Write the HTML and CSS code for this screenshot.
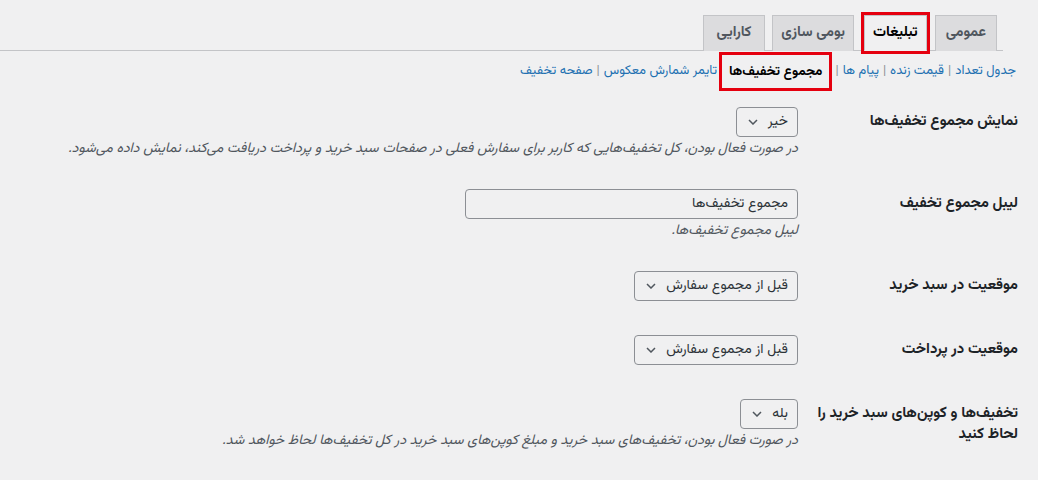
FILE: index.html
```html
<!DOCTYPE html>
<html lang="fa" dir="rtl">
<head>
<meta charset="utf-8">
<title>تنظیمات تبلیغات</title>
<link rel="stylesheet" href="styles.css">
</head>
<body>
<div class="wrap">
  <nav class="tabs">
    <a class="tab" href="#">عمومی</a>
    <a class="tab tab-active" href="#">تبلیغات</a>
    <a class="tab tab-narrow" href="#">بومی سازی</a>
    <a class="tab tab-wide" href="#">کارایی</a>
  </nav>
  <ul class="subnav">
    <li><a href="#">جدول تعداد</a><span class="sep">|</span></li>
    <li><a href="#">قیمت زنده</a><span class="sep">|</span></li>
    <li><a href="#">پیام ها</a><span class="sep">|</span></li>
    <li><a class="current" href="#">مجموع تخفیف‌ها</a></li>
    <li><a href="#">تایمر شمارش معکوس</a><span class="sep">|</span></li>
    <li><a href="#">صفحه تخفیف</a></li>
  </ul>
  <div class="form">
    <div class="row">
      <div class="label">نمایش مجموع تخفیف‌ها</div>
      <div class="field">
        <span class="select"><span class="select-text">خیر</span><svg class="chev" width="10" height="6" viewBox="0 0 10 6"><path d="M1 1l4 4 4-4" fill="none" stroke="#50575e" stroke-width="1.5"/></svg></span>
        <p class="desc">در صورت فعال بودن، کل تخفیف‌هایی که کاربر برای سفارش فعلی در صفحات سبد خرید و پرداخت دریافت می‌کند، نمایش داده می‌شود.</p>
      </div>
    </div>
    <div class="row">
      <div class="label">لیبل مجموع تخفیف</div>
      <div class="field">
        <span class="input">مجموع تخفیف‌ها</span>
        <p class="desc">لیبل مجموع تخفیف‌ها.</p>
      </div>
    </div>
    <div class="row row-plain">
      <div class="label">موقعیت در سبد خرید</div>
      <div class="field">
        <span class="select"><span class="select-text">قبل از مجموع سفارش</span><svg class="chev" width="10" height="6" viewBox="0 0 10 6"><path d="M1 1l4 4 4-4" fill="none" stroke="#50575e" stroke-width="1.5"/></svg></span>
      </div>
    </div>
    <div class="row row-plain">
      <div class="label">موقعیت در پرداخت</div>
      <div class="field">
        <span class="select"><span class="select-text">قبل از مجموع سفارش</span><svg class="chev" width="10" height="6" viewBox="0 0 10 6"><path d="M1 1l4 4 4-4" fill="none" stroke="#50575e" stroke-width="1.5"/></svg></span>
      </div>
    </div>
    <div class="row">
      <div class="label label-nowrap">تخفیف‌ها و کوپن‌های سبد خرید را<br>لحاظ کنید</div>
      <div class="field">
        <span class="select"><span class="select-text">بله</span><svg class="chev" width="10" height="6" viewBox="0 0 10 6"><path d="M1 1l4 4 4-4" fill="none" stroke="#50575e" stroke-width="1.5"/></svg></span>
        <p class="desc">در صورت فعال بودن، تخفیف‌های سبد خرید و مبلغ کوپن‌های سبد خرید در کل تخفیف‌ها لحاظ خواهد شد.</p>
      </div>
    </div>
  </div>
</div>
</body>
</html>
```
FILE: styles.css
```css
html, body {
  margin: 0;
  padding: 0;
  background: #f0f0f1;
}
body {
  direction: rtl;
  font-family: "Vazirmatn", "Noto Sans Arabic", "Noto Naskh Arabic", "DejaVu Sans", sans-serif;
  color: #1d2327;
  font-size: 14px;
}
.wrap {
  padding-right: 20px;
}
.tabs {
  display: flex;
  align-items: flex-end;
  margin-right: 15px;
  padding-right: 6px;
  padding-top: 15px;
  border-bottom: 1px solid #c3c4c7;
  height: 35px;
}
.tab {
  display: block;
  box-sizing: border-box;
  height: 36px;
  line-height: 33px;
  padding: 0 10px;
  margin-left: 7px;
  margin-bottom: -1px;
  border: 1px solid #c3c4c7;
  border-bottom: none;
  background: #dcdcde;
  color: #50575e;
  font-weight: 700;
  font-size: 14.5px;
  text-decoration: none;
}
.tab-narrow {
  padding: 0 8px;
}
.tab-wide {
  padding: 0 13px;
}
.tab-active {
  background: #f0f0f1;
  color: #000;
  border-bottom: 1px solid #f0f0f1;
  outline: 3px solid #e5000f;
  padding: 0 8px;
  margin-left: 10px;
  margin-right: 1px;
}
.subnav {
  list-style: none;
  margin: 0 2px 0 0;
  padding: 0;
  display: flex;
  align-items: center;
  height: 40px;
  font-size: 13px;
}
.subnav li {
  display: flex;
  align-items: center;
}
.subnav a {
  color: #2271b1;
  text-decoration: none;
}
.subnav .sep {
  color: #8c8f94;
  padding: 0 4px;
}
.subnav .current {
  color: #000;
  font-weight: 700;
  font-size: 13.5px;
  padding: 6px 7px;
  outline: 3px solid #e5000f;
  margin: 0 2px 0 5px;
}
.form {
  margin-top: 1px;
}
.row {
  display: flex;
  align-items: flex-start;
}
.label {
  width: 200px;
  flex: none;
  padding: 19px 0 17px 10px;
  font-weight: 700;
  font-size: 15px;
  line-height: 21px;
  color: #1d2327;
}
.label-nowrap {
  white-space: nowrap;
}
.field {
  padding: 15px 10px;
  flex: 1;
}
.row-plain .field {
  padding-bottom: 19px;
}
.select {
  display: inline-flex;
  align-items: center;
  gap: 10px;
  height: 30px;
  box-sizing: border-box;
  padding: 0 9px 0 11px;
  border: 1px solid #8c8f94;
  border-radius: 4px;
  color: #2c3338;
  font-size: 14px;
}
.chev {
  display: block;
  flex: none;
}
.input {
  display: flex;
  align-items: center;
  width: 333px;
  height: 30px;
  box-sizing: border-box;
  padding: 0 9px;
  border: 1px solid #8c8f94;
  border-radius: 4px;
  color: #2c3338;
  font-size: 14px;
}
.desc {
  margin: 2px 0 0;
  font-size: 14px;
  line-height: 20px;
  font-style: italic;
  color: #50575e;
  white-space: nowrap;
}
```
